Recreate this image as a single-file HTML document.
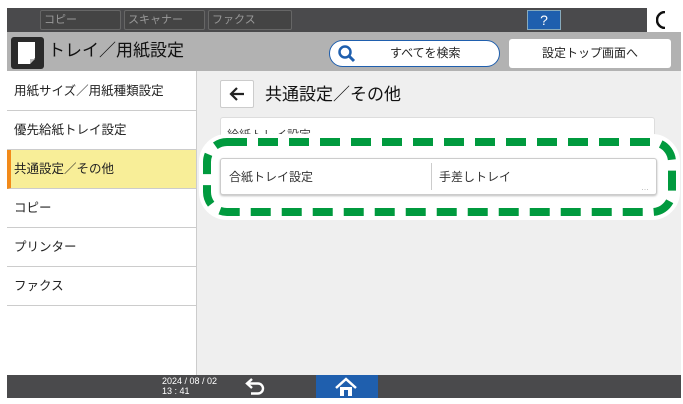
<!DOCTYPE html><html><head><meta charset="utf-8"><style>
*{margin:0;padding:0;box-sizing:border-box}
body{width:683px;height:404px;background:#fff;position:relative;overflow:hidden;font-family:"Liberation Sans","Noto Sans CJK JP",sans-serif;color:#222}
.a{position:absolute}
.tab{position:absolute;top:10px;height:20px;border:1px solid #666;border-radius:2px;color:#999;font-size:11px;line-height:18px;padding-left:3px;background:#444}
.side div{position:absolute;left:7px;width:189px;height:39px;border-bottom:1px solid #ccc;font-size:12.5px;line-height:38px;padding-left:7px;background:#fff}
</style></head><body>
<div class="a" style="left:7px;top:8px;width:674px;height:24px;background:#4a4a4c"></div>
<div class="tab" style="left:40px;width:81px">コピー</div>
<div class="tab" style="left:124px;width:81px">スキャナー</div>
<div class="tab" style="left:208px;width:84px">ファクス</div>
<div class="a" style="left:527px;top:10px;width:34px;height:20px;background:#1f5fae;border:1px solid #8ab;color:#fff;font-size:14px;text-align:center;line-height:18px">?</div>
<div class="a" style="left:647px;top:8px;width:34px;height:24px;background:#fff"></div>
<svg class="a" style="left:656px;top:11px" width="14" height="18"><path d="M9 1A8 8 0 0 0 9 17" fill="none" stroke="#111" stroke-width="2.5"/></svg>
<div class="a" style="left:7px;top:32px;width:674px;height:39px;background:#b2b2b2"></div>
<div class="a" style="left:11px;top:37px;width:33px;height:32px;background:#2a2a2a;border-radius:3px"></div>
<svg class="a" style="left:17px;top:41px" width="20" height="24"><path d="M1 1H18V17L13 23H1Z" fill="#fff"/><path d="M13 23V18H18" fill="#bbb"/></svg>
<div class="a" style="left:48px;top:40px;font-size:17px;line-height:22px;color:#111">トレイ／用紙設定</div>
<div class="a" style="left:329px;top:40px;width:171px;height:27px;background:#fff;border:1.5px solid #1f5fae;border-radius:14px;font-size:12px;line-height:24px;padding-left:60px">すべてを検索</div>
<svg class="a" style="left:337px;top:44px" width="20" height="20"><circle cx="8" cy="8" r="5.5" fill="none" stroke="#1f5fae" stroke-width="2.5"/><path d="M12 12l5 5" stroke="#1f5fae" stroke-width="3"/></svg>
<div class="a" style="left:509px;top:39px;width:162px;height:29px;background:#fff;border-radius:3px;font-size:12px;line-height:29px;text-align:center">設定トップ画面へ</div>
<div class="a" style="left:196px;top:71px;width:485px;height:304px;background:#efefef;border-left:1px solid #ccc"></div>
<div class="side">
<div style="top:72px">用紙サイズ／用紙種類設定</div>
<div style="top:111px">優先給紙トレイ設定</div>
<div style="top:150px;background:#f8ee98;border-left:4px solid #f28a1a;padding-left:3px">共通設定／その他</div>
<div style="top:189px">コピー</div>
<div style="top:228px">プリンター</div>
<div style="top:267px">ファクス</div>
<div style="top:306px;height:69px;border:none"></div>
</div>
<div class="a" style="left:220px;top:80px;width:34px;height:28px;background:#fff;border:1px solid #ccc;border-radius:2px"></div>
<svg class="a" style="left:228px;top:86px" width="18" height="16"><path d="M16 8H3M9 2L3 8L9 14" fill="none" stroke="#222" stroke-width="2.2"/></svg>
<div class="a" style="left:265px;top:84px;font-size:17px;line-height:22px;color:#111">共通設定／その他</div>
<div class="a" style="left:220px;top:117px;width:435px;height:40px;background:#fff;border:1px solid #ddd;border-radius:3px;font-size:12px;padding:8px 6px;color:#444">給紙トレイ設定</div>
<svg class="a" style="left:196px;top:132px" width="485" height="88"><rect x="11" y="10" width="465" height="70" rx="20" fill="#fff" stroke="#fff" stroke-width="16"/><rect x="11" y="10" width="465" height="70" rx="20" fill="none" stroke="#009a3e" stroke-width="8" stroke-dasharray="20 11"/></svg>
<div class="a" style="left:220px;top:158px;width:437px;height:37px;background:#fff;border:1px solid #ccc;border-radius:3px;box-shadow:0 1px 2px #bbb"></div>
<div class="a" style="left:431px;top:163px;width:1px;height:27px;background:#ccc"></div>
<div class="a" style="left:229px;top:168px;font-size:12px;color:#333">合紙トレイ設定</div>
<div class="a" style="left:439px;top:168px;font-size:12px;color:#333">手差しトレイ</div>
<div class="a" style="left:641px;top:183px;font-size:8px;color:#aaa">…</div>
<div class="a" style="left:7px;top:375px;width:674px;height:23px;background:#4a4a4c"></div>
<div class="a" style="left:162px;top:376px;font-size:9px;line-height:10px;color:#fff">2024 / 08 / 02<br>13 : 41</div>
<svg class="a" style="left:245px;top:377px" width="22" height="19"><path d="M7 2L2 6.5L7 11M2 6.5H13A5 5 0 0 1 13 16.5H6" fill="none" stroke="#fff" stroke-width="2.4"/></svg>
<div class="a" style="left:316px;top:375px;width:62px;height:23px;background:#1f5fae"></div>
<svg class="a" style="left:334px;top:377px" width="24" height="20"><path d="M2 11L12 2L22 11" fill="none" stroke="#fff" stroke-width="2.5"/><path d="M6 10v9h12v-9" fill="#fff"/><rect x="10" y="13" width="4" height="6" fill="#1f5fae"/></svg>
</body></html>
